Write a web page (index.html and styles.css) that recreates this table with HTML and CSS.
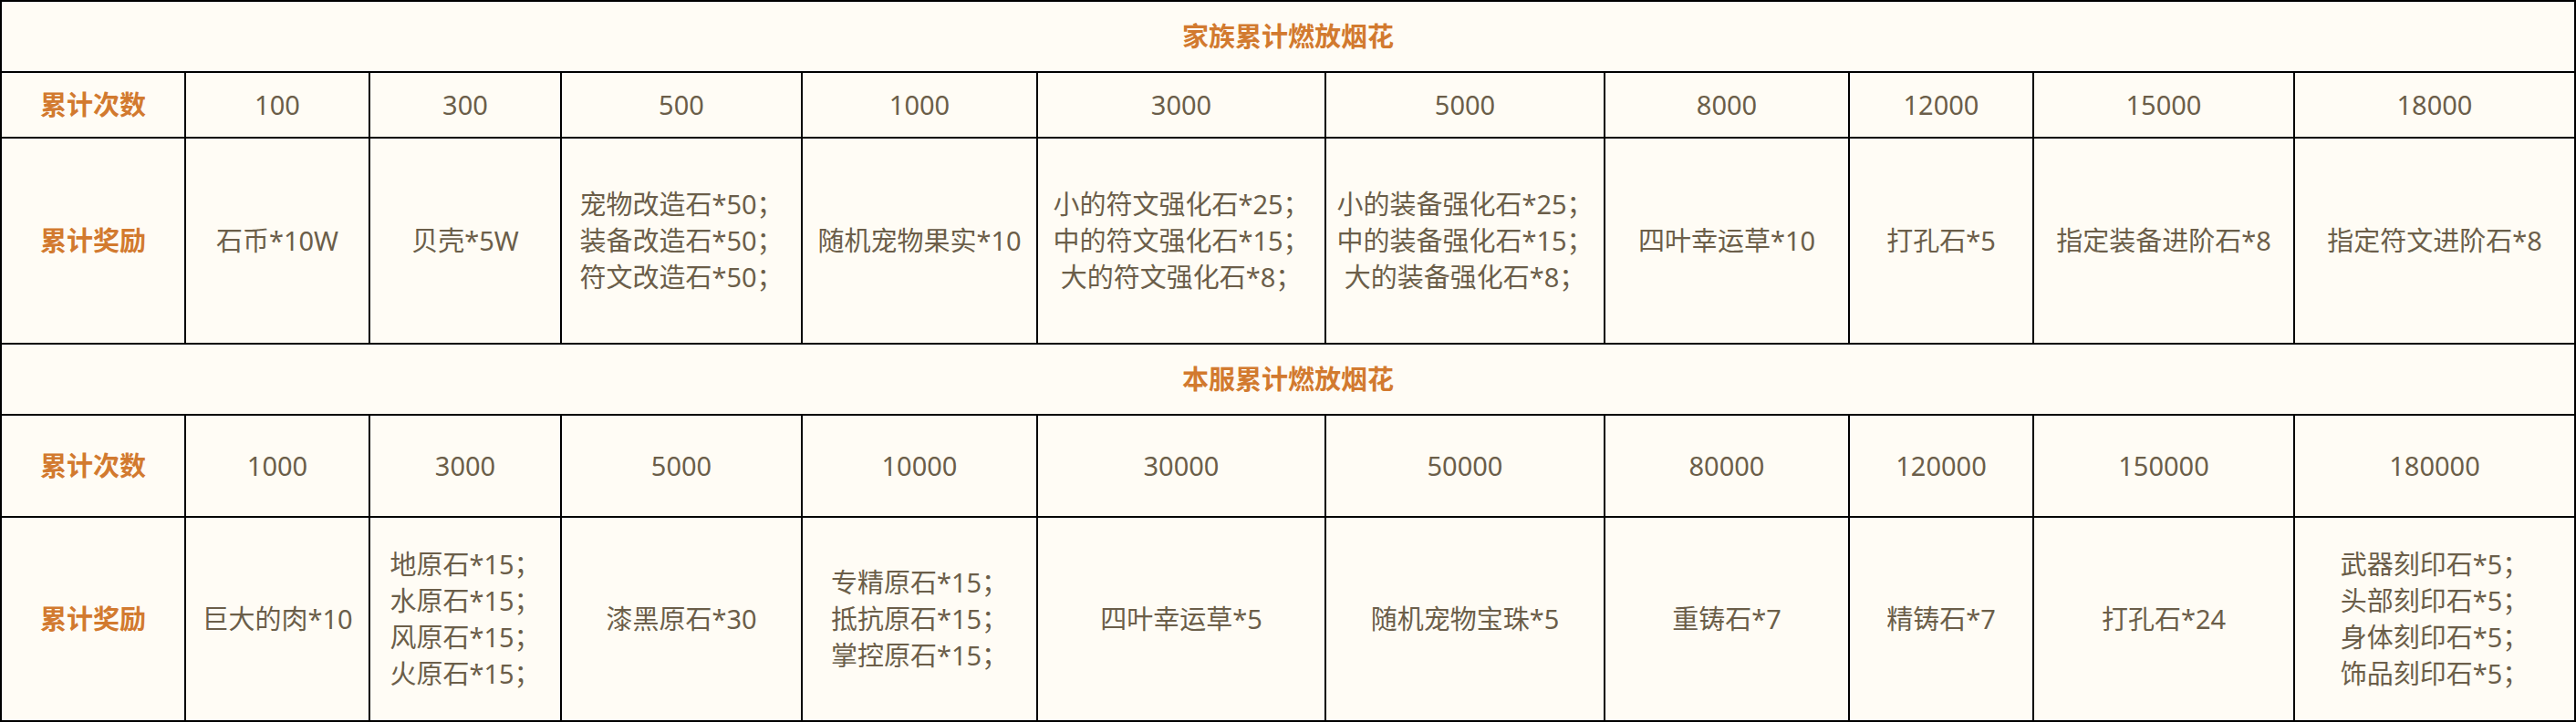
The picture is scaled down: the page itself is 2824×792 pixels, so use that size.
FILE: index.html
```html
<!DOCTYPE html>
<html lang="zh-CN">
<head>
<meta charset="utf-8">
<title>累计燃放烟花奖励</title>
<link rel="stylesheet" href="styles.css">
</head>
<body>
<div class="board">
  <div class="cell title">家族累计燃放烟花</div>

  <div class="cell label row-count">累计次数</div>
  <div class="cell">100</div>
  <div class="cell">300</div>
  <div class="cell">500</div>
  <div class="cell">1000</div>
  <div class="cell">3000</div>
  <div class="cell">5000</div>
  <div class="cell">8000</div>
  <div class="cell">12000</div>
  <div class="cell">15000</div>
  <div class="cell">18000</div>

  <div class="cell label">累计奖励</div>
  <div class="cell">石币*10W</div>
  <div class="cell">贝壳*5W</div>
  <div class="cell">宠物改造石*50；<br>装备改造石*50；<br>符文改造石*50；</div>
  <div class="cell">随机宠物果实*10</div>
  <div class="cell">小的符文强化石*25；<br>中的符文强化石*15；<br>大的符文强化石*8；</div>
  <div class="cell">小的装备强化石*25；<br>中的装备强化石*15；<br>大的装备强化石*8；</div>
  <div class="cell">四叶幸运草*10</div>
  <div class="cell">打孔石*5</div>
  <div class="cell">指定装备进阶石*8</div>
  <div class="cell">指定符文进阶石*8</div>

  <div class="cell title">本服累计燃放烟花</div>

  <div class="cell label">累计次数</div>
  <div class="cell">1000</div>
  <div class="cell">3000</div>
  <div class="cell">5000</div>
  <div class="cell">10000</div>
  <div class="cell">30000</div>
  <div class="cell">50000</div>
  <div class="cell">80000</div>
  <div class="cell">120000</div>
  <div class="cell">150000</div>
  <div class="cell">180000</div>

  <div class="cell label">累计奖励</div>
  <div class="cell">巨大的肉*10</div>
  <div class="cell">地原石*15；<br>水原石*15；<br>风原石*15；<br>火原石*15；</div>
  <div class="cell">漆黑原石*30</div>
  <div class="cell">专精原石*15；<br>抵抗原石*15；<br>掌控原石*15；</div>
  <div class="cell">四叶幸运草*5</div>
  <div class="cell">随机宠物宝珠*5</div>
  <div class="cell">重铸石*7</div>
  <div class="cell">精铸石*7</div>
  <div class="cell">打孔石*24</div>
  <div class="cell">武器刻印石*5；<br>头部刻印石*5；<br>身体刻印石*5；<br>饰品刻印石*5；</div>
</div>
</body>
</html>
```

FILE: styles.css
```css
html, body {
  margin: 0;
  padding: 0;
  background: #fffcf5;
}

.board {
  display: grid;
  grid-template-columns: 202px 202px 210px 264px 258px 316px 306px 268px 202px 286px 308px;
  grid-template-rows: 78px 72px 226px 78px 112px 224px;
  width: 2824px;
  box-sizing: border-box;
  border-top: 2px solid #000;
  border-left: 2px solid #000;
  background: #fffcf5;
  font-family: "Noto Sans", "Noto Sans CJK SC", sans-serif;
  font-size: 29px;
  line-height: 40px;
  color: #6b5e49;
}

.cell {
  box-sizing: border-box;
  border-right: 2px solid #000;
  border-bottom: 2px solid #000;
  display: flex;
  align-items: center;
  justify-content: center;
  text-align: center;
  white-space: nowrap;
}

.title {
  grid-column: 1 / -1;
  color: #d27a2f;
  font-weight: 700;
}

.label {
  color: #d27a2f;
  font-weight: 700;
}
```
